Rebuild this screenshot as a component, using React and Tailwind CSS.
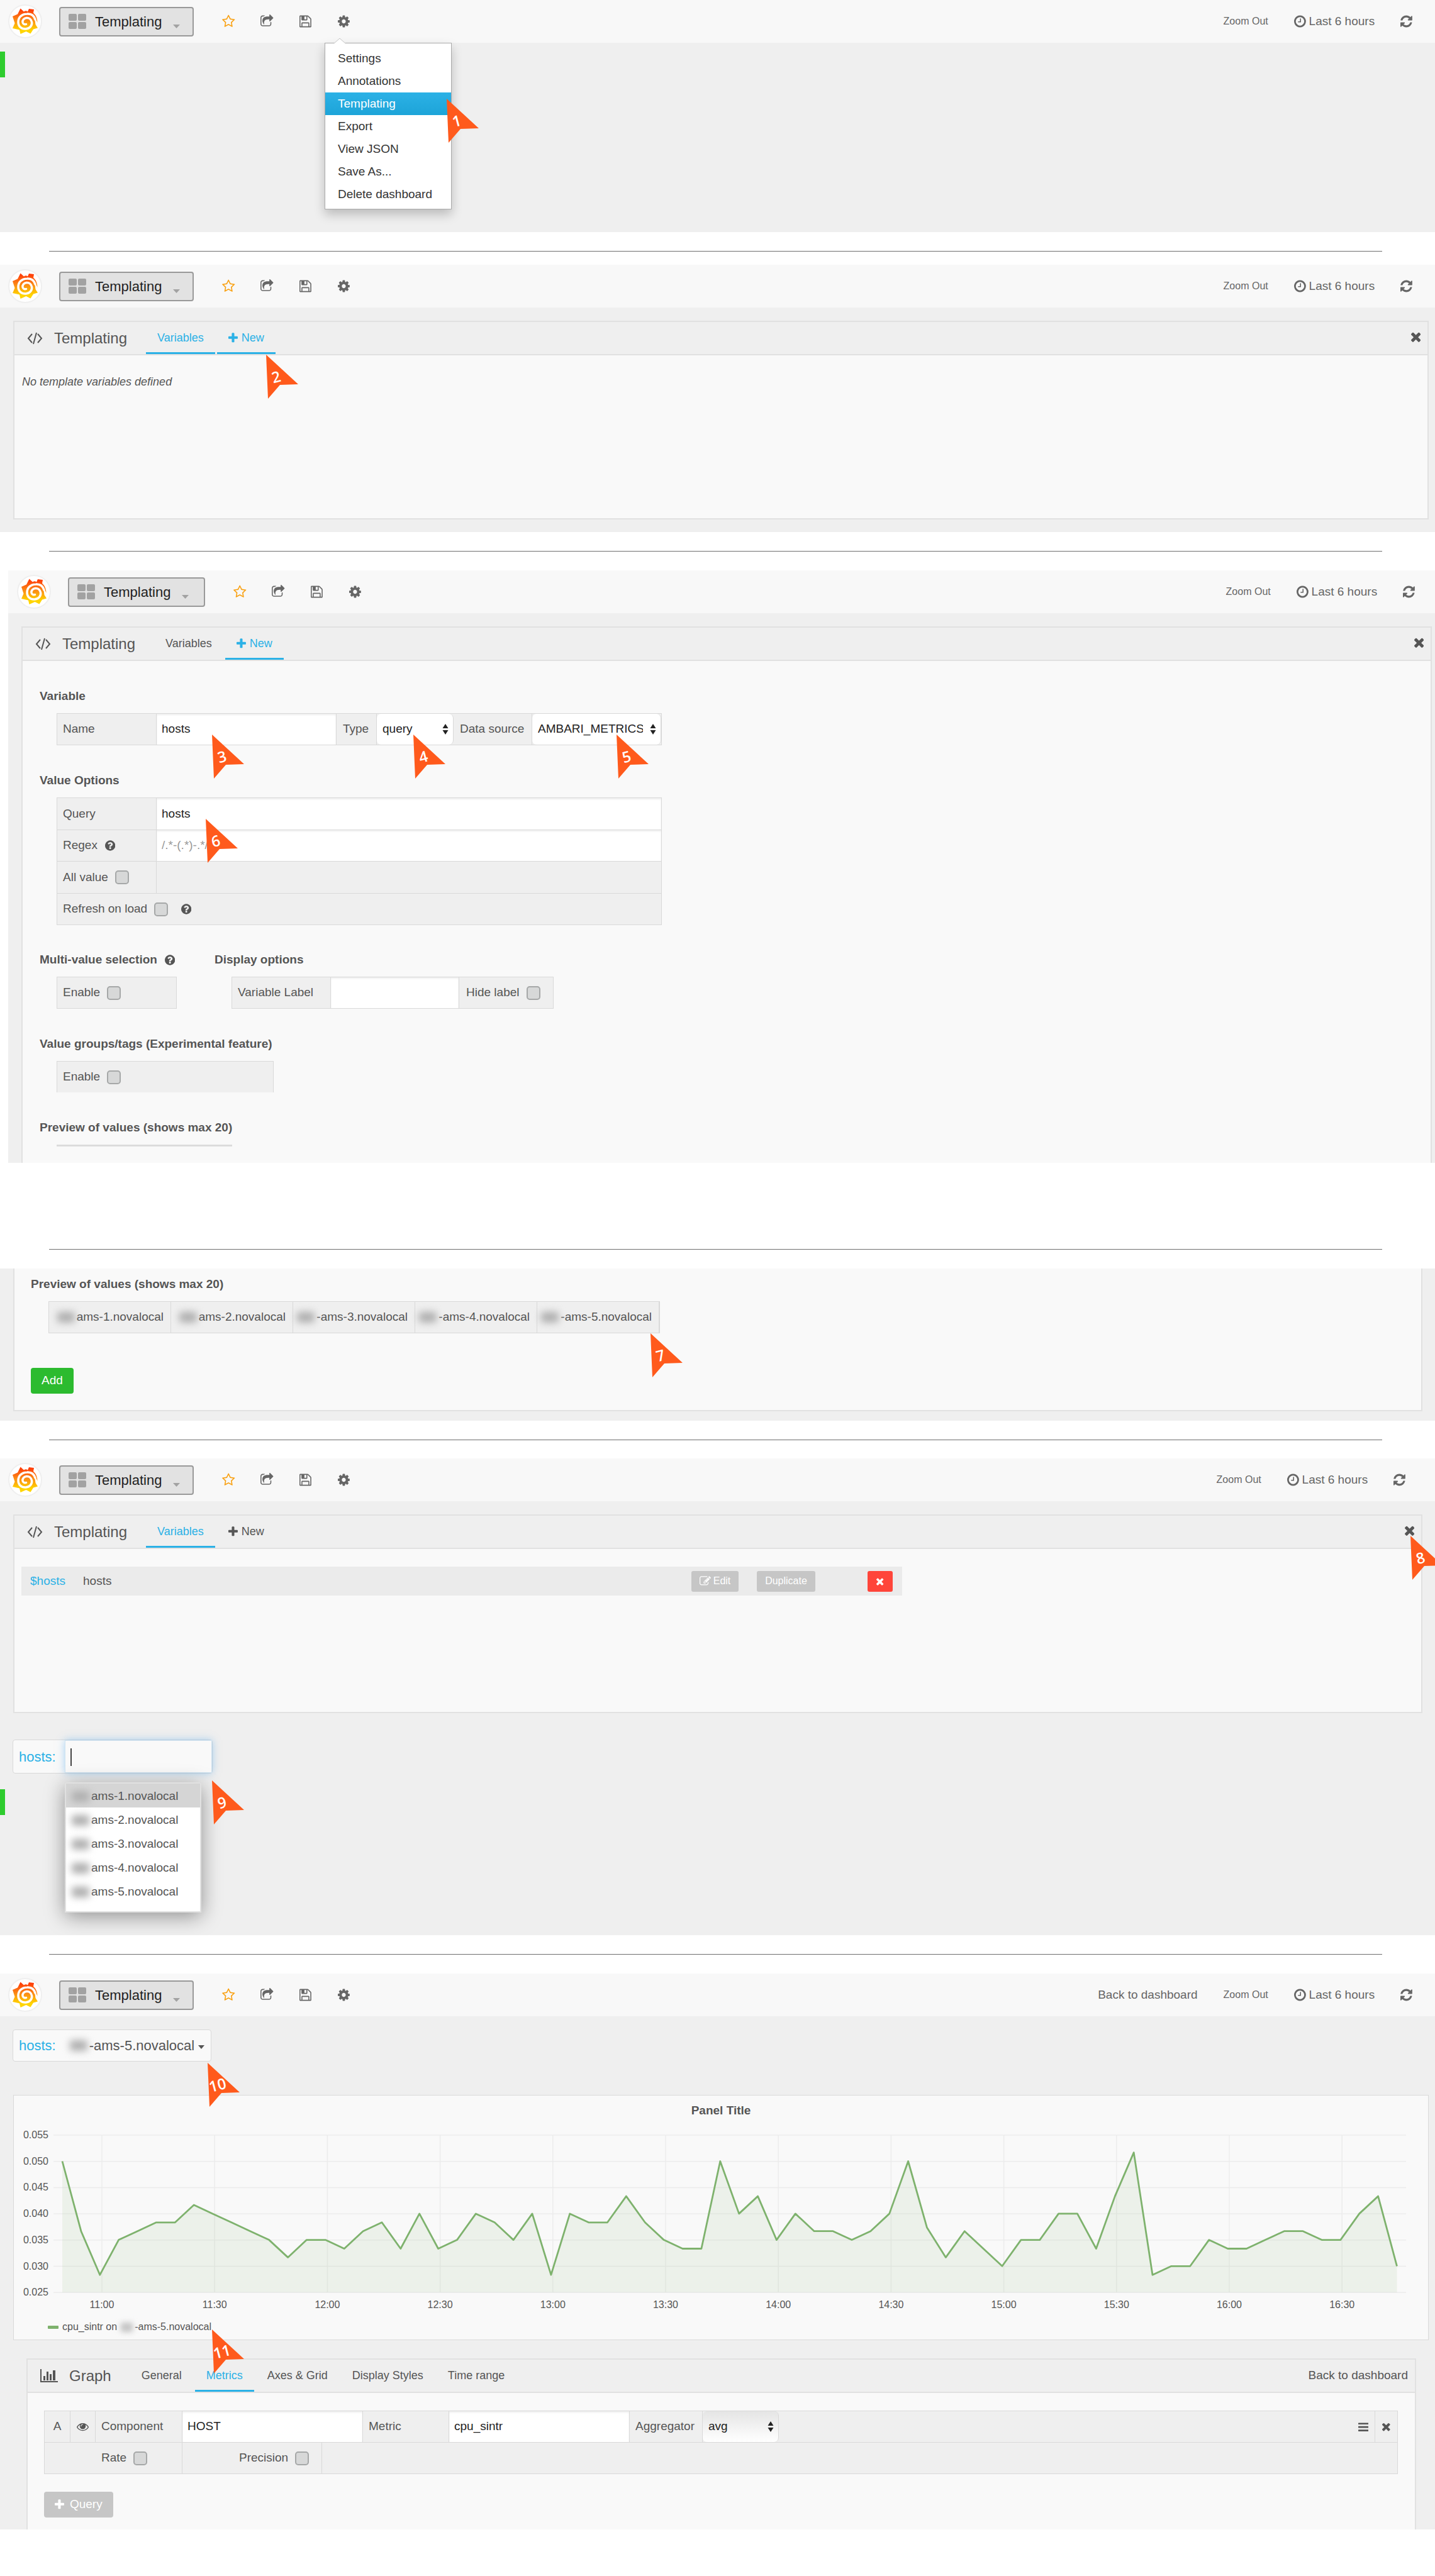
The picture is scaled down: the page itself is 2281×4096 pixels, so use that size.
import React from "react";

const ICONS = {
  star: [64, 1664, "M1201 1004l306-297-422-62-189-382-189 382-422 62 306 297-73 421 378-199 377 199zM1728 647q0 22-26 48l-363 354 86 500q1 7 1 20 0 50-41 50-19 0-40-12l-449-236-449 236q-22 12-40 12-21 0-31.500-14.500t-10.500-35.500q0-6 2-20l86-500-364-354q-25-27-25-48 0-37 56-46l502-73 225-455q19-41 49-41t49 41l225 455 502 73q56 9 56 46z"],
  share: [64, 1664, "M1472 989v259q0 119-84.500 203.500t-203.500 84.500h-832q-119 0-203.500-84.500t-84.500-203.500v-832q0-119 84.500-203.500t203.500-84.500h255q13 0 22.500 9.500t9.500 22.500q0 27-26 32-77 26-133 60-10 4-16 4h-112q-66 0-113 47t-47 113v832q0 66 47 113t113 47h832q66 0 113-47t47-113v-214q0-19 18-29 28-13 54-37 16-16 35-8 21 9 21 29zm237-496l-384 384q-18 19-45 19-12 0-25-5-39-17-39-59v-192h-160q-323 0-438 131-119 137-74 473 3 23-20 34-8 2-12 2-16 0-26-13-10-14-21-31t-39.500-68.500-49.500-99.500-38.500-114-17.500-122q0-49 3.500-91t14-90 28-88 47-81.500 68.500-74 94.500-61.500 124.500-48.500 159.500-30.500 196.500-11h160v-192q0-42 39-59 13-5 25-5 26 0 45 19l384 384q19 19 19 45t-19 45z"],
  save: [128, 1536, "M512 1536h768v-384h-768v384zm896 0h128v-896q0-14-10-38.500t-20-34.500l-281-281q-10-10-34-20t-39-10v416q0 40-28 68t-68 28h-576q-40 0-68-28t-28-68v-416h-128v1280h128v-416q0-40 28-68t68-28h832q40 0 68 28t28 68v416zm-384-928v-320q0-13-9.500-22.500t-22.500-9.500h-192q-13 0-22.500 9.500t-9.500 22.500v320q0 13 9.500 22.500t22.500 9.500h192q13 0 22.500-9.500t9.500-22.500zm640 32v928q0 40-28 68t-68 28h-1344q-40 0-68-28t-28-68v-1344q0-40 28-68t68-28h928q40 0 88 20t76 48l280 280q28 28 48 76t20 88z"],
  cog: [128, 1536, "M1152 896q0-106-75-181t-181-75-181 75-75 181 75 181 181 75 181-75 75-181zm512-109v222q0 12-8 23t-20 13l-185 28q-19 54-39 91 35 50 107 138 10 12 10 25t-9 23q-27 37-99 108t-94 71q-12 0-26-9l-138-108q-44 23-91 38-16 136-29 186-7 28-36 28h-222q-14 0-24.500-8.500t-11.500-21.500l-28-184q-49-16-90-37l-141 107q-10 9-25 9-14 0-25-11-126-114-165-168-7-10-7-23 0-12 8-23 15-21 51-66.500t54-70.500q-27-50-41-99l-183-27q-13-2-21-12.500t-8-23.500v-222q0-12 8-23t19-13l186-28q14-46 39-92-40-57-107-138-10-12-10-24 0-10 9-23 26-36 98.500-107.500t94.500-71.500q13 0 26 10l138 107q44-23 91-38 16-136 29-186 7-28 36-28h222q14 0 24.500 8.500t11.500 21.500l28 184q49 16 90 37l142-107q9-9 24-9 13 0 25 10 129 119 165 170 7 8 7 22 0 12-8 23-15 21-51 66.500t-54 70.500q26 50 41 98l183 28q13 2 21 12.500t8 23.500z"],
  clock: [128, 1536, "M1024 544v448q0 14-9 23t-23 9h-320q-14 0-23-9t-9-23v-64q0-14 9-23t23-9h224v-352q0-14 9-23t23-9h64q14 0 23 9t9 23zm416 352q0-148-73-273t-198-198-273-73-273 73-198 198-73 273 73 273 198 198 273 73 273-73 198-198 73-273zm224 0q0 209-103 385.500t-279.500 279.500-385.500 103-385.500-103-279.500-279.500-103-385.500 103-385.500 279.500-279.500 385.500-103 385.500 103 279.500 279.500 103 385.500z"],
  refresh: [128, 1536, "M1639 1056q0 5-1 7-64 268-268 434.500t-478 166.500q-146 0-282.500-55t-243.500-157l-129 129q-19 19-45 19t-45-19-19-45v-448q0-26 19-45t45-19h448q26 0 45 19t19 45-19 45l-137 137q71 66 161 102t187 36q134 0 250-65t186-179q11-17 53-117 8-23 30-23h192q13 0 22.500 9.500t9.500 22.500zm25-800v448q0 26-19 45t-45 19h-448q-26 0-45-19t-19-45 19-45l138-138q-148-137-349-137-134 0-250 65t-186 179q-11 17-53 117-8 23-30 23h-199q-13 0-22.500-9.500t-9.500-22.500v-7q65-268 270-434.500t480-166.500q146 0 284 55.500t245 156.500l130-129q19-19 45-19t45 19 19 45z"],
  times: [302, 1188, "M1490 1322q0 40-28 68l-136 136q-28 28-68 28t-68-28l-294-294-294 294q-28 28-68 28t-68-28l-136-136q-28-28-28-68t28-68l294-294-294-294q-28-28-28-68t28-68l136-136q28-28 68-28t68 28l294 294 294-294q28-28 68-28t68 28l136 136q28 28 28 68t-28 68l-294 294 294 294q28 28 28 68z"],
  plus: [192, 1408, "M1600 736v192q0 40-28 68t-68 28h-416v416q0 40-28 68t-68 28h-192q-40 0-68-28t-28-68v-416h-416q-40 0-68-28t-28-68v-192q0-40 28-68t68-28h416v-416q0-40 28-68t68-28h192q40 0 68 28t28 68v416h416q40 0 68 28t28 68z"],
  help: [128, 1536, "M1024 1376v-192q0-14-9-23t-23-9h-192q-14 0-23 9t-9 23v192q0 14 9 23t23 9h192q14 0 23-9t9-23zm256-672q0-88-55.500-163t-138.500-116-170-41q-243 0-371 213-15 24 8 42l132 100q7 6 19 6 16 0 25-12 53-68 86-92 34-24 86-24 48 0 85.500 26t37.500 59q0 38-20 61t-68 45q-63 28-115.500 86.500t-52.500 125.500v36q0 14 9 23t23 9h192q14 0 23-9t9-23q0-19 21.500-49.500t54.500-49.500q32-18 49-28.500t46-35 44.500-48 28-60.500 12.500-81zm384 192q0 209-103 385.500t-279.500 279.500-385.500 103-385.500-103-279.500-279.500-103-385.500 103-385.500 279.500-279.500 385.500-103 385.500 103 279.500 279.500 103 385.500z"],
  eye: [0, 1792, "M1664 960q-152-236-381-353 61 104 61 225 0 185-131.500 316.500t-316.500 131.500-316.500-131.500-131.500-316.500q0-121 61-225-229 117-381 353 133 205 333.500 326.500t434.500 121.500 434.500-121.500 333.500-326.500zm-720-384q0-20-14-34t-34-14q-125 0-214.500 89.500t-89.500 214.500q0 20 14 34t34 14 34-14 14-34q0-86 61-147t147-61q20 0 34-14t14-34zm848 384q0 34-20 69-140 230-376.500 368.500t-499.500 138.500-499.500-139-376.500-368q-20-35-20-69t20-69q140-229 376.500-368t499.500-139 499.500 139 376.500 368q20 35 20 69z"],
  edit: [0, 1792, "M888 1184l116-116-152-152-116 116v56h96v96h56zm440-720q-16-16-33 1l-350 350q-17 17-1 33t33-1l350-350q17-17 1-33zm80 594v190q0 119-84.500 203.500t-203.500 84.500h-832q-119 0-203.500-84.500t-84.500-203.500v-832q0-119 84.500-203.500t203.500-84.500h832q63 0 117 25 15 7 18 23 3 17-9 29l-49 49q-14 14-32 8-23-6-45-6h-832q-66 0-113 47t-47 113v832q0 66 47 113t113 47h832q66 0 113-47t47-113v-126q0-13 9-22l64-64q15-15 35-7t20 29zm-96-738l288 288-672 672h-288v-288zm444 132l-92 92-288-288 92-92q28-28 68-28t68 28l152 152q28 28 28 68t-28 68z"],
  bars: [128, 1536, "M128 384q0-64 64-64h1408q64 0 64 64v128q0 64-64 64h-1408q-64 0-64-64zM128 896q0-64 64-64h1408q64 0 64 64v128q0 64-64 64h-1408q-64 0-64-64zM128 1408q0-64 64-64h1408q64 0 64 64v128q0 64-64 64h-1408q-64 0-64-64z"],
};

function Icon({ name, className = "h-[19px]" }) {
  const [x, w, d] = ICONS[name];
  return (
    <svg viewBox={`${x} 0 ${w} 1792`} className={`w-auto shrink-0 fill-current ${className}`} aria-hidden="true">
      <path d={d} />
    </svg>
  );
}

function Logo() {
  return (
    <svg viewBox="0 0 54 54" className="size-[54px] shrink-0" aria-label="Grafana">
      <defs>
        <linearGradient id="flame" x1="0" y1="0" x2="0" y2="1">
          <stop offset="0.05" stopColor="#ff3d0a" />
          <stop offset="0.45" stopColor="#fb8a16" />
          <stop offset="0.85" stopColor="#ffd500" />
        </linearGradient>
      </defs>
      <circle cx="27" cy="27" r="26" fill="#fff" stroke="#efefef" strokeWidth="2" />
      <path
        fill="url(#flame)"
        d="M19.500 6.500L25 11.500Q28 9 31 11.500L33 7L41 8L40 13.500C44 17 46.500 22 46.500 29C45 25 43.500 23 42 22L43.500 32L47 37.500L40 39.500L35.500 46.500L28.500 43L19.500 47L18 40.500L7 38L10.500 30L7 19L15 15.500Z"
      />
      <path
        fill="none"
        stroke="#fff"
        strokeWidth="3.500"
        strokeLinecap="round"
        d="M43 24C41 17.500 36 14.500 30 15C21 15.500 16 21 16 28C16 35 21 39.500 28 39C35 38.500 38.500 33 37.500 28C36.500 23.500 33 21 29 21.500C25 22 22.500 25 23 28.500C23.500 31 26 32.500 28.500 31.500"
      />
    </svg>
  );
}

function Header({ leftPad = "pl-[13px]", rightPad = "pr-[36px]", titlePad = "w-[214px]", back, menu }) {
  return (
    <header className="flex h-[68px] justify-between bg-[#f8f8f8]">
      <div className={`flex items-center ${leftPad}`}>
        <Logo />
        <button className={`ml-[27px] flex h-[47px] items-center rounded-[4px] border-2 border-[#999] bg-[#e2e2e2] pl-[13px] text-[22px] text-[#222] ${titlePad}`}>
          <span className="grid grid-cols-2 gap-[2px]">
            <span className="h-[11px] w-[13px] rounded-[2px] bg-[#a2a2a2]" />
            <span className="h-[11px] w-[13px] rounded-[2px] bg-[#a2a2a2]" />
            <span className="h-[11px] w-[13px] rounded-[2px] bg-[#a2a2a2]" />
            <span className="h-[11px] w-[13px] rounded-[2px] bg-[#a2a2a2]" />
          </span>
          <span className="ml-[14px]">Templating</span>
          <svg viewBox="0 0 11 6" className="mt-[16px] ml-[18px] h-[6px] w-[11px] fill-[#a2a2a2]" aria-hidden="true">
            <path d="M0 0H11L5.500 6Z" />
          </svg>
        </button>
        <nav className="ml-[25px] flex h-full items-center text-[#666]">
          <button aria-label="Star dashboard" className="flex w-[61px] justify-center text-[#f9a010]"><Icon name="star" className="h-[22px]" /></button>
          <button aria-label="Share dashboard" className="flex w-[61px] justify-center"><Icon name="share" className="h-[22px]" /></button>
          <button aria-label="Save dashboard" className="flex w-[61px] justify-center"><Icon name="save" className="h-[22px]" /></button>
          <div className="relative flex h-full w-[61px] items-center justify-center">
            <button aria-label="Manage dashboard"><Icon name="cog" className="h-[22px]" /></button>
            {menu}
          </div>
        </nav>
      </div>
      <div className={`flex items-center gap-[41px] text-[19px] text-[#666] ${rightPad}`}>
        {back && <a href="#dashboard">Back to dashboard</a>}
        <a href="#zoom-out" className="text-[16px]">Zoom Out</a>
        <button className="flex items-center gap-[5px]">
          <Icon name="clock" className="h-[22px]" />
          Last 6 hours
        </button>
        <button aria-label="Refresh"><Icon name="refresh" className="h-[22px]" /></button>
      </div>
    </header>
  );
}

function Marker({ n, className }) {
  return (
    <svg viewBox="0 0 52 71" className={`pointer-events-none absolute z-20 h-[71px] w-[52px] ${className}`} aria-hidden="true">
      <path d="M0 0L51 47L22 48L3 70Z" fill="#ff5a1c" />
      <text x="16" y="44" textAnchor="middle" transform="rotate(-15 16 36)" className="fill-white font-['Open_Sans',sans-serif] text-[24px] font-semibold">
        {n}
      </text>
    </svg>
  );
}

function Divider({ className }) {
  return <hr className={`mr-[84px] ml-[78px] border-0 border-t border-[#6e6e6e] ${className}`} />;
}

function CodeIcon() {
  return (
    <svg viewBox="0 0 25 20" className="h-[20px] w-[25px] fill-none stroke-[#555] stroke-2" aria-hidden="true">
      <path d="M8 3L2 10L8 17M17 3L23 10L17 17M15 1L10 19" />
    </svg>
  );
}

function ChartIcon() {
  return (
    <svg viewBox="0 0 28 21" className="h-[21px] w-[28px] fill-[#555]" aria-hidden="true">
      <path d="M0 0H2V19H28V21H0ZM5 11H8V18H5ZM10 4H13V18H10ZM15 8H18V18H15ZM20 2H24V18H20Z" />
    </svg>
  );
}

function PanelHead({ icon, title, tabs, right }) {
  return (
    <div className="flex h-[53px] justify-between border-b-2 border-[#e1e1e1] bg-[#efefef] text-[#555]">
      <div className="flex items-center pl-[20px]">
        {icon}
        <h2 className="mr-[30px] ml-[18px] text-[24px]">{title}</h2>
        <nav className="flex h-full text-[18px]">
          {tabs.map((t) => (
            <a
              key={t.label}
              href={`#${t.label.toLowerCase().replace(/\W+/g, "-")}`}
              className={
                t.active
                  ? "mr-[3px] flex items-center gap-[6px] border-b-3 border-[#2bb1e6] px-[18px] pt-[3px] text-[#2bb1e6]"
                  : "mr-[3px] flex items-center gap-[6px] border-b-3 border-transparent px-[18px] pt-[3px]"
              }
            >
              {t.plus && <Icon name="plus" />}
              {t.label}
            </a>
          ))}
        </nav>
      </div>
      {right}
    </div>
  );
}

function CloseButton() {
  return (
    <button aria-label="Close" className="mr-[11px] pb-[4px] text-[#555]">
      <Icon name="times" className="h-[23px]" />
    </button>
  );
}

const HEADING = "flex h-[24px] items-center gap-[12px] text-[19px] leading-[24px] font-bold text-[#555]";
const FIELD = "min-w-0 border-r border-[#d9d9d9] bg-white px-[8px] text-[19px] text-[#222] outline-none shadow-[inset_0_2px_3px_rgba(0,0,0,0.07)]";

function Check({ id }) {
  return <input id={id} type="checkbox" className="size-[22px] shrink-0 appearance-none rounded-[5px] border-2 border-[#a6a8a8] bg-[#d7d8d8]" />;
}

function Picker({ id, value, className, fill = "bg-white" }) {
  return (
    <div className={`relative flex ${className}`}>
      <select id={id} defaultValue={value} className={`w-full appearance-none rounded-[7px] border-r border-[#d9d9d9] pr-[28px] pl-[9px] text-[19px] text-[#222] outline-none ${fill}`}>
        <option>{value}</option>
      </select>
      <svg viewBox="0 0 10 17" className="pointer-events-none absolute top-[16px] right-[8px] h-[17px] w-[10px] fill-[#222]" aria-hidden="true">
        <path d="M5 0L9.500 7H0.500ZM5 17L0.500 10H9.500Z" />
      </svg>
    </div>
  );
}

function Redacted() {
  return <span className="my-auto mr-[3px] h-[17px] w-[28px] rounded-[4px] bg-[#b0b0b0] blur-[6px]" />;
}

const HOSTS = [1, 2, 3, 4, 5];

/* values counted in steps of 1/600, one sample every five minutes */
const SERIES = [
  30, 22, 17, 21, 22, 23, 23, 25, 24, 23, 22, 21, 19, 21, 21, 20, 22, 23, 20, 24, 20, 21, 24, 23, 21, 24, 17, 24, 23, 23, 26, 23, 21, 20,
  20, 30, 24, 26, 21, 24, 22, 22, 21, 22, 24, 30, 22.4, 19, 22, 20, 18, 21, 21, 24, 24, 20, 26, 31, 17, 18, 18, 21, 20, 20, 21, 22, 22,
  21, 21, 24, 26, 18,
];
const TIMES = ["11:00", "11:30", "12:00", "12:30", "13:00", "13:30", "14:00", "14:30", "15:00", "15:30", "16:00", "16:30"];
const LEVELS = ["0.055", "0.050", "0.045", "0.040", "0.035", "0.030", "0.025"];

function Graph() {
  const points = SERIES.map((v, i) => `${(77 + i * 29.88).toFixed(1)},${(265 - (v - 15) * 13.9).toFixed(1)}`).join(" ");
  const lastX = (77 + (SERIES.length - 1) * 29.88).toFixed(1);
  return (
    <svg viewBox="0 0 2248 300" className="mt-[12px] block h-auto w-full" role="img" aria-label="cpu_sintr over time">
      {LEVELS.map((l, i) => (
        <g key={l}>
          <line x1="63" x2="2213" y1={15 + i * 41.7} y2={15 + i * 41.7} stroke="#ececec" strokeWidth="1.500" />
          <text x="55" y={20 + i * 41.7} textAnchor="end" className="fill-[#555] text-[16px]">{l}</text>
        </g>
      ))}
      {TIMES.map((t, i) => (
        <g key={t}>
          <line x1={140 + i * 179.2} x2={140 + i * 179.2} y1="15" y2="265" stroke="#ececec" strokeWidth="1.500" />
          <text x={140 + i * 179.2} y="290" textAnchor="middle" className="fill-[#555] text-[16px]">{t}</text>
        </g>
      ))}
      <polygon points={`77,265 ${points} ${lastX},265`} fill="#7eb26d" fillOpacity="0.1" />
      <polyline points={points} fill="none" stroke="#7eb26d" strokeWidth="2.800" strokeLinejoin="round" />
    </svg>
  );
}

const MENU = ["Settings", "Annotations", "Templating", "Export", "View JSON", "Save As...", "Delete dashboard"];

function SettingsMenu() {
  return (
    <div className="absolute top-full left-0 z-10 w-[202px] border border-[#aaa] bg-white pt-[6px] pb-[5px] text-[19px] text-[#333] shadow-[0_8px_16px_rgba(0,0,0,0.22)]">
      <svg viewBox="0 0 18 10" className="absolute -top-[9px] left-[14px] h-[10px] w-[18px] fill-white stroke-[#c4c4c4]" aria-hidden="true">
        <path d="M0 9L9 1L18 9" />
      </svg>
      {MENU.map((m) => (
        <a
          key={m}
          href={`#${m.toLowerCase().replace(/\W+/g, "-")}`}
          className={
            m === "Templating"
              ? "block h-[36px] bg-linear-to-b from-[#2bb1e6] to-[#1da4d8] pl-[20px] leading-[36px] whitespace-nowrap text-white"
              : "block h-[36px] pl-[20px] leading-[36px] whitespace-nowrap"
          }
        >
          {m}
        </a>
      ))}
      <Marker n="1" className="top-[88px] left-[193px]" />
    </div>
  );
}

export default function App() {
  return (
    <main className="min-h-screen overflow-hidden bg-white font-['Liberation_Sans',Arial,sans-serif] leading-normal">
      <section className="bg-[#efefef]">
        <Header menu={<SettingsMenu />} />
        <div className="min-h-[301px] pt-[14px]">
          <div className="h-[41px] w-[8px] bg-[#2ecc2e]" />
        </div>
      </section>

      <Divider className="mt-[30px] mb-[21px]" />

      <section className="bg-[#efefef] pb-[20px]">
        <Header />
        <div className="relative mt-[21px] mr-[10px] ml-[21px] min-h-[316px] border-2 border-[#e1e1e1] bg-[#f9f9f9]">
          <PanelHead
            icon={<CodeIcon />}
            title="Templating"
            tabs={[{ label: "Variables", active: true }, { label: "New", plus: true, active: true }]}
            right={<CloseButton />}
          />
          <p className="mt-[28px] ml-[12px] text-[18px] leading-[28px] text-[#555] italic">No template variables defined</p>
          <Marker n="2" className="top-[52px] left-[400px]" />
        </div>
      </section>

      <Divider className="mt-[30px] mb-[30px]" />

      <section className="ml-[13px] bg-[#efefef]">
        <Header rightPad="pr-[32px]" titlePad="w-[218px]" leftPad="pl-[14px]" />
        <div className="mt-[21px] mr-[5px] ml-[21px] border-2 border-b-0 border-[#e1e1e1] bg-[#f9f9f9]">
          <PanelHead
            icon={<CodeIcon />}
            title="Templating"
            tabs={[{ label: "Variables" }, { label: "New", plus: true, active: true }]}
            right={<CloseButton />}
          />
          <form className="pt-[44px] pb-[26px] pl-[27px] text-[19px] text-[#555]">
            <h3 className={HEADING}>Variable</h3>
            <div className="relative mt-[15px] ml-[27px] flex h-[51px] w-[962px] border border-[#d9d9d9] bg-[#efefef]">
              <label htmlFor="var-name" className="flex w-[158px] items-center border-r border-[#d9d9d9] pl-[9px]">Name</label>
              <input id="var-name" defaultValue="hosts" className={`w-[286px] ${FIELD}`} />
              <label htmlFor="var-type" className="flex w-[64px] items-center border-r border-[#d9d9d9] pl-[10px]">Type</label>
              <Picker id="var-type" value="query" className="w-[122px]" />
              <label htmlFor="var-source" className="flex w-[125px] items-center border-r border-[#d9d9d9] pl-[10px]">Data source</label>
              <Picker id="var-source" value="AMBARI_METRICS" className="flex-1" />
              <Marker n="3" className="top-[33px] left-[246px]" />
              <Marker n="4" className="top-[33px] left-[566px]" />
              <Marker n="5" className="top-[33px] left-[889px]" />
            </div>

            <h3 className={`mt-[44px] ${HEADING}`}>Value Options</h3>
            <div className="relative mt-[15px] ml-[27px] w-[962px] border border-b-0 border-[#d9d9d9] bg-[#efefef]">
              <div className="flex h-[51px] border-b border-[#d9d9d9]">
                <label htmlFor="opt-query" className="flex w-[158px] items-center border-r border-[#d9d9d9] pl-[9px]">Query</label>
                <input id="opt-query" defaultValue="hosts" className={`flex-1 border-r-0 ${FIELD}`} />
              </div>
              <div className="flex h-[50px] border-b border-[#d9d9d9]">
                <label htmlFor="opt-regex" className="flex w-[158px] items-center gap-[12px] border-r border-[#d9d9d9] pl-[9px]">
                  Regex <Icon name="help" />
                </label>
                <input id="opt-regex" placeholder="/.*-(.*)-.*/" className={`flex-1 border-r-0 placeholder:text-[#999] ${FIELD}`} />
              </div>
              <div className="flex h-[51px] border-b border-[#d9d9d9]">
                <div className="flex w-[158px] items-center gap-[11px] border-r border-[#d9d9d9] pl-[9px]">
                  <label htmlFor="opt-all">All value</label>
                  <Check id="opt-all" />
                </div>
              </div>
              <div className="flex h-[50px] items-center gap-[11px] border-b border-[#d9d9d9] pl-[9px]">
                <label htmlFor="opt-refresh">Refresh on load</label>
                <Check id="opt-refresh" />
                <span className="ml-[10px]"><Icon name="help" /></span>
              </div>
              <Marker n="6" className="top-[33px] left-[236px]" />
            </div>

            <div className="mt-[43px] flex gap-[60px]">
              <div className="w-[218px]">
                <h3 className={HEADING}>Multi-value selection <Icon name="help" /></h3>
                <div className="mt-[15px] ml-[27px] flex h-[51px] items-center gap-[11px] border border-[#d9d9d9] bg-[#efefef] pl-[9px]">
                  <label htmlFor="multi-enable">Enable</label>
                  <Check id="multi-enable" />
                </div>
              </div>
              <div>
                <h3 className={HEADING}>Display options</h3>
                <div className="mt-[15px] ml-[27px] flex h-[51px] w-[512px] border border-[#d9d9d9] bg-[#efefef]">
                  <label htmlFor="disp-label" className="flex w-[157px] items-center border-r border-[#d9d9d9] pl-[9px]">Variable Label</label>
                  <input id="disp-label" className={`w-[204px] ${FIELD}`} />
                  <div className="flex items-center gap-[11px] pl-[11px]">
                    <label htmlFor="disp-hide">Hide label</label>
                    <Check id="disp-hide" />
                  </div>
                </div>
              </div>
            </div>

            <h3 className={`mt-[44px] ${HEADING}`}>Value groups/tags (Experimental feature)</h3>
            <div className="mt-[15px] ml-[27px] flex h-[50px] w-[345px] items-center gap-[11px] border border-b-0 border-[#d9d9d9] bg-[#efefef] pl-[9px]">
              <label htmlFor="tags-enable">Enable</label>
              <Check id="tags-enable" />
            </div>

            <h3 className={`mt-[44px] ${HEADING}`}>Preview of values (shows max 20)</h3>
            <div className="mt-[15px] ml-[27px] h-[3px] w-[279px] bg-[#dcdcdc]" />
          </form>
        </div>
      </section>

      <Divider className="mt-[137px] mb-[30px]" />

      <section className="bg-[#efefef] pb-[15px]">
        <div className="relative mr-[20px] ml-[21px] border-2 border-t-0 border-[#e1e1e1] bg-[#f9f9f9] pt-[13px] pb-[26px] pl-[26px]">
          <h3 className={HEADING}>Preview of values (shows max 20)</h3>
          <ul className="relative mt-[15px] ml-[28px] flex h-[51px] w-[972px] border border-[#d9d9d9] bg-[#efefef] text-[19px] text-[#555]">
            {HOSTS.map((n) => (
              <li key={n} className="flex flex-1 items-center justify-end border-r border-[#d9d9d9] pr-[11px] last:border-r-0">
                <Redacted />
                {n > 2 ? `-ams-${n}.novalocal` : `ams-${n}.novalocal`}
              </li>
            ))}
            <Marker n="7" className="top-[50px] left-[956px]" />
          </ul>
          <button className="mt-[55px] h-[41px] rounded-[4px] bg-[#2cbb2f] px-[17px] text-[19px] text-white">Add</button>
        </div>
      </section>

      <Divider className="mt-[30px] mb-[29px]" />

      <section className="overflow-hidden bg-[#efefef] pb-[36px]">
        <Header rightPad="pr-[47px]" />
        <div className="relative mt-[21px] mr-[20px] ml-[21px] min-h-[316px] border-2 border-[#e1e1e1] bg-[#f9f9f9]">
          <PanelHead
            icon={<CodeIcon />}
            title="Templating"
            tabs={[{ label: "Variables", active: true }, { label: "New", plus: true }]}
            right={<CloseButton />}
          />
          <table className="mt-[28px] ml-[11px] w-[1400px] table-fixed bg-[#ebebeb] text-[19px] text-[#555]">
            <tbody>
              <tr className="h-[46px]">
                <td className="w-[84px] pl-[14px] text-[#2bb1e6]">$hosts</td>
                <td className="pl-[14px]">hosts</td>
                <td className="w-[104px]">
                  <button className="flex h-[33px] w-[75px] items-center justify-center gap-[4px] rounded-[3px] bg-[#c6c6c6] text-[16px] text-white">
                    <Icon name="edit" className="h-[18px]" />Edit
                  </button>
                </td>
                <td className="w-[176px]">
                  <button className="h-[33px] w-[93px] rounded-[3px] bg-[#c6c6c6] text-[16px] text-white">Duplicate</button>
                </td>
                <td className="w-[55px]">
                  <button aria-label="Delete variable" className="flex h-[33px] w-[40px] items-center justify-center rounded-[3px] bg-[#ff453a] text-white">
                    <Icon name="times" className="h-[17px]" />
                  </button>
                </td>
              </tr>
            </tbody>
          </table>
          <Marker n="8" className="top-[32px] left-[2219px]" />
        </div>

        <div className="relative mt-[42px] ml-[20px] flex h-[54px] w-[318px] rounded-[4px] border border-[#d9d9d9] bg-[#f9f9f9] text-[22px]">
          <label htmlFor="host-search" className="flex w-[82px] items-center pl-[9px] text-[#2bb1e6]">hosts:</label>
          <div className="relative flex flex-1">
            <input id="host-search" className="w-full min-w-0 border border-[#cfe3f1] bg-[#f9f9f9] px-[10px] outline-none shadow-[0_0_12px_rgba(82,168,236,0.5)]" />
            <span className="absolute top-[13px] left-[9px] h-[28px] w-[2px] bg-[#444]" />
          </div>
          <ul className="absolute top-[67px] left-[82px] z-10 w-[217px] rounded-t-[4px] border-2 border-[#e1e1e1] bg-white pb-[13px] text-[19px] text-[#555] shadow-[0_6px_32px_rgba(0,0,0,0.4)]">
            {HOSTS.map((n) => (
              <li key={n} className={n === 1 ? "flex h-[38px] items-center bg-[#d5d5d5] pt-[2px] pl-[9px]" : "flex h-[38px] items-center pt-[2px] pl-[9px]"}>
                <Redacted />
                ams-{n}.novalocal
              </li>
            ))}
          </ul>
          <Marker n="9" className="top-[64px] left-[316px]" />
        </div>
        <div className="mt-[25px] h-[41px] w-[8px] bg-[#2ecc2e]" />
        <div className="h-[155px]" />
      </section>

      <Divider className="mt-[30px] mb-[30px]" />

      <section className="bg-[#efefef]">
        <Header back />
        <div className="relative mt-[21px] ml-[20px] flex h-[51px] w-[316px] items-center rounded-[4px] border border-[#d9d9d9] bg-[#f9f9f9] pl-[9px] text-[22px] text-[#555]">
          <span className="text-[#2bb1e6]">hosts:</span>
          <button className="ml-[22px] flex items-center">
            <Redacted />
            -ams-5.novalocal
            <svg viewBox="0 0 10 6" className="mt-[4px] ml-[6px] h-[6px] w-[10px] fill-[#555]" aria-hidden="true">
              <path d="M0 0H10L5 6Z" />
            </svg>
          </button>
          <Marker n="10" className="top-[52px] left-[309px]" />
        </div>

        <div className="relative mt-[53px] mr-[10px] ml-[21px] border border-[#d9d9d9] bg-[#f9f9f9] pt-[12px] pb-[8px]">
          <h3 className="text-center text-[19px] leading-[24px] font-bold text-[#555]">Panel Title</h3>
          <Graph />
          <div className="mt-[8px] ml-[54px] flex h-[24px] items-center text-[16px] text-[#555]">
            <span className="mr-[6px] h-[5px] w-[17px] rounded-[1px] bg-[#7eb26d]" />
            cpu_sintr on
            <span className="mr-[3px] ml-[6px] h-[15px] w-[19px] bg-[#c4c4c4] blur-[4px]" />
            -ams-5.novalocal
          </div>
          <Marker n="11" className="top-[372px] left-[315px]" />
        </div>

        <div className="mt-[29px] mr-[30px] ml-[42px] border-2 border-b-0 border-[#e1e1e1] bg-[#f9f9f9] pb-[19px]">
          <PanelHead
            icon={<ChartIcon />}
            title="Graph"
            tabs={[{ label: "General" }, { label: "Metrics", active: true }, { label: "Axes & Grid" }, { label: "Display Styles" }, { label: "Time range" }]}
            right={<a href="#dashboard" className="mr-[11px] self-center text-[19px]">Back to dashboard</a>}
          />
          <div className="mt-[28px] mr-[27px] ml-[26px] border border-[#d9d9d9] bg-[#efefef] text-[19px] text-[#555]">
            <div className="flex h-[50px] border-b border-[#d9d9d9]">
              <span className="flex w-[41px] items-center justify-center border-r border-[#d9d9d9]">A</span>
              <button aria-label="Toggle query" className="flex w-[40px] items-center justify-center border-r border-[#d9d9d9]"><Icon name="eye" /></button>
              <label htmlFor="q-component" className="flex w-[138px] items-center border-r border-[#d9d9d9] pl-[9px]">Component</label>
              <input id="q-component" defaultValue="HOST" className={`w-[287px] ${FIELD}`} />
              <label htmlFor="q-metric" className="flex w-[137px] items-center border-r border-[#d9d9d9] pl-[9px]">Metric</label>
              <input id="q-metric" defaultValue="cpu_sintr" className={`w-[287px] ${FIELD}`} />
              <label htmlFor="q-agg" className="flex w-[116px] items-center border-r border-[#d9d9d9] pl-[9px]">Aggregator</label>
              <Picker id="q-agg" value="avg" className="w-[121px]" fill="bg-linear-to-b from-[#e5e5e5] to-white" />
              <button aria-label="Query menu" className="ml-auto flex items-center border-r border-[#d9d9d9] px-[10px]"><Icon name="bars" /></button>
              <button aria-label="Remove query" className="flex w-[35px] items-center justify-center"><Icon name="times" /></button>
            </div>
            <div className="flex h-[49px]">
              <div className="flex w-[219px] items-center gap-[11px] border-r border-[#d9d9d9] pl-[90px]">
                <label htmlFor="q-rate">Rate</label>
                <Check id="q-rate" />
              </div>
              <div className="flex w-[222px] items-center gap-[11px] border-r border-[#d9d9d9] pl-[90px]">
                <label htmlFor="q-precision">Precision</label>
                <Check id="q-precision" />
              </div>
            </div>
          </div>
          <button className="mt-[28px] ml-[26px] flex h-[41px] items-center gap-[9px] rounded-[4px] bg-[#c6c6c6] px-[17px] text-[19px] text-white">
            <Icon name="plus" />Query
          </button>
        </div>
      </section>
    </main>
  );
}
